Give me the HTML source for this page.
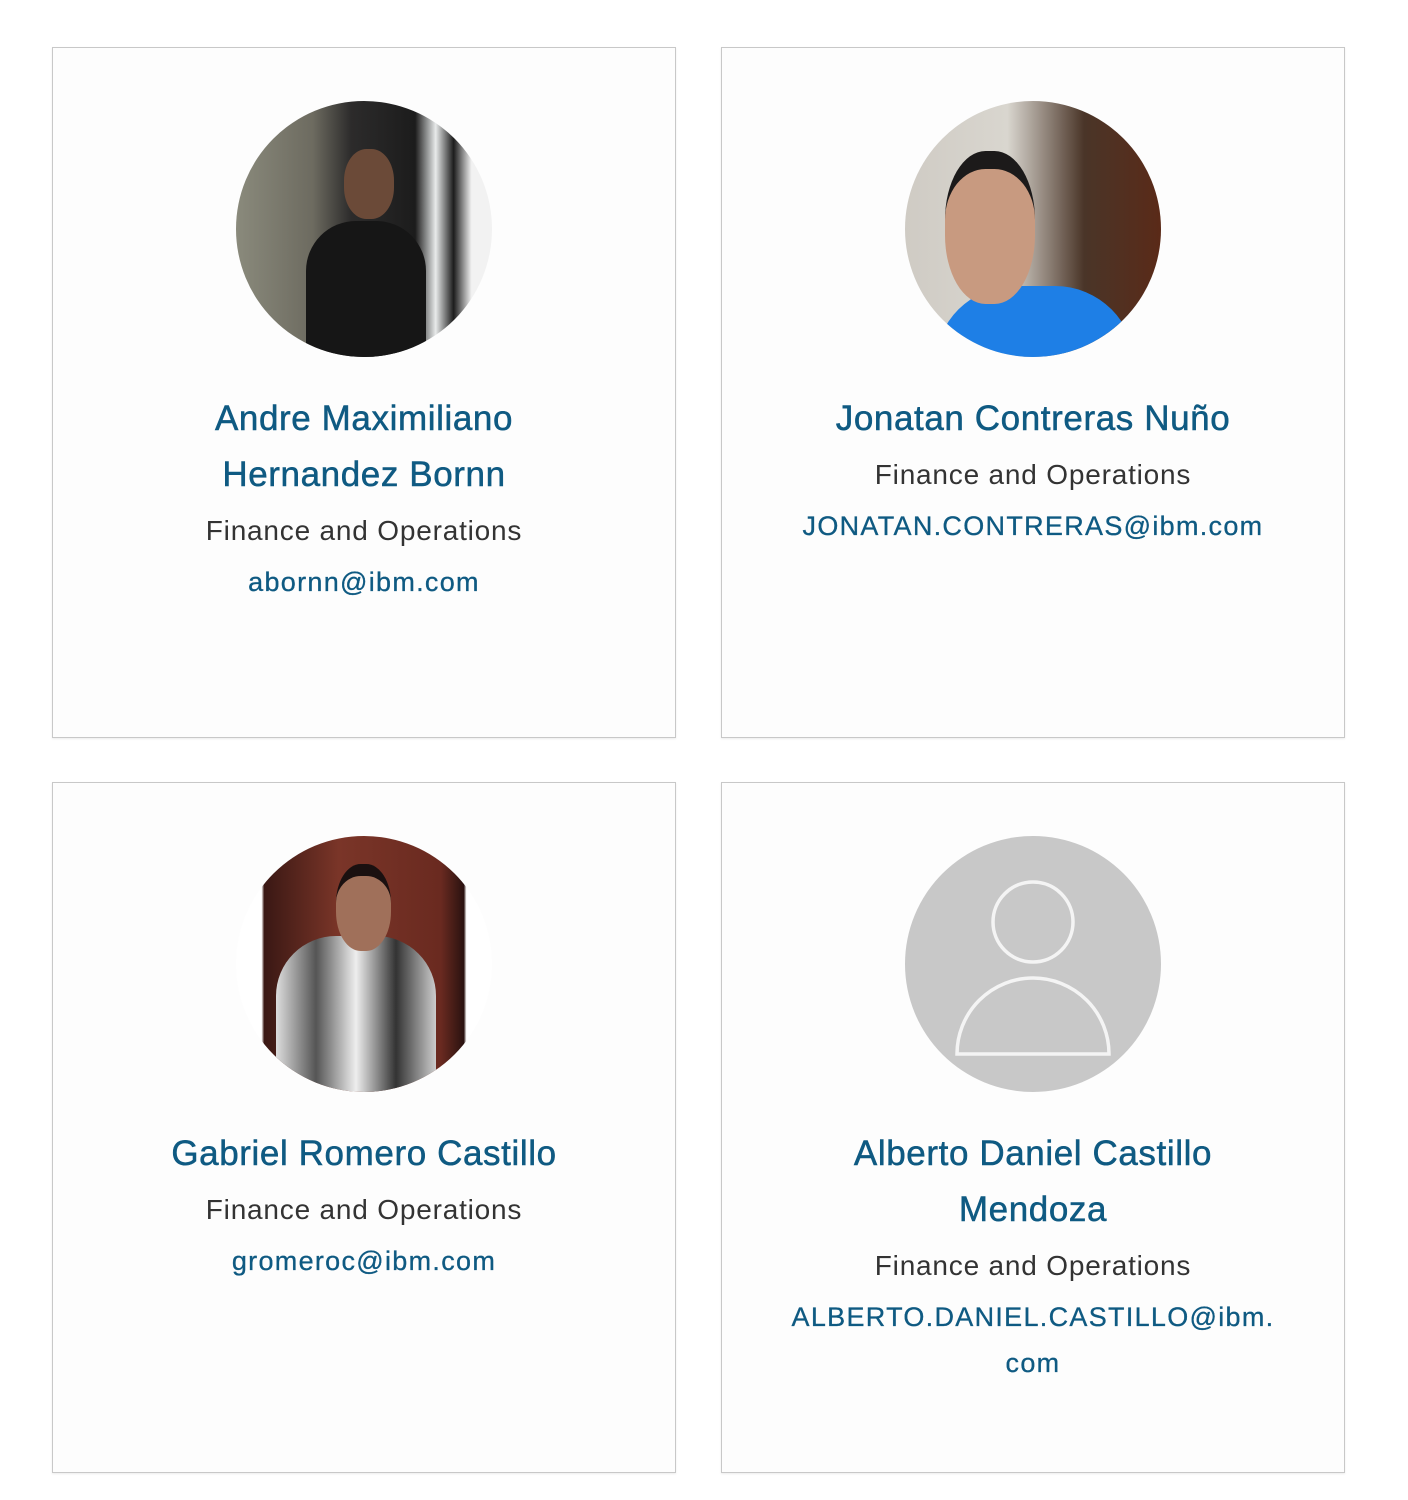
<!DOCTYPE html>
<html><head><meta charset="utf-8"><style>
body{margin:0;background:#fff;width:1408px;height:1500px;position:relative;font-family:"Liberation Sans",sans-serif}
.card{position:absolute;width:624px;height:691px;border:1px solid #c8c8c8;background:#fdfdfd;box-shadow:0 1px 2px rgba(0,0,0,.08);text-align:center;box-sizing:border-box}
.av{position:absolute;left:183px;top:53px;width:256px;height:256px;border-radius:50%;overflow:hidden}
.txt{position:absolute;top:343px;left:0;right:0}
.n{color:#0f5a82;font-size:35px;line-height:56px;letter-spacing:.6px;-webkit-text-stroke:.5px #0f5a82;width:450px;margin:0 auto}
.j{color:#333;font-size:28px;line-height:56px;letter-spacing:.8px;font-weight:300}
.e{color:#0f5a82;font-size:27px;line-height:46px;letter-spacing:1.3px;-webkit-text-stroke:.3px #0f5a82}
</style></head><body>
<div class="card" style="left:52px;top:47px">
<div class="av" style="background:linear-gradient(90deg,#8a8a7c 0%,#6d6b60 30%,#2c2b2b 45%,#1c1c1c 70%,#e8eaea 78%,#1c1c1c 85%,#f2f2f2 92%)">
<div style="position:absolute;left:70px;top:120px;width:120px;height:150px;background:#161616;border-radius:50px 50px 0 0"></div>
<div style="position:absolute;left:108px;top:48px;width:50px;height:70px;background:#6b4a38;border-radius:45%"></div>
</div>
<div class="txt"><div class="n">Andre Maximiliano Hernandez Bornn</div><div class="j">Finance and Operations</div><div class="e">abornn@ibm.com</div></div></div>

<div class="card" style="left:721px;top:47px">
<div class="av" style="background:linear-gradient(90deg,#cfcbc4 0%,#d9d6cf 40%,#4a3528 70%,#5a2a18 100%)">
<div style="position:absolute;left:30px;top:185px;width:200px;height:100px;background:#1e7fe6;border-radius:80px 80px 0 0"></div>
<div style="position:absolute;left:40px;top:50px;width:90px;height:135px;background:#c89a80;border-radius:45%;border-top:18px solid #1c1a1a"></div>
</div>
<div class="txt"><div class="n">Jonatan Contreras Nuño</div><div class="j">Finance and Operations</div><div class="e">JONATAN.CONTRERAS@ibm.com</div></div></div>

<div class="card" style="left:52px;top:782px">
<div class="av" style="background:linear-gradient(90deg,#fff 0%,#fff 10%,#3a1814 11%,#7a3528 40%,#6a2a20 80%,#2a1210 89%,#fff 90%)">
<div style="position:absolute;left:40px;top:100px;width:160px;height:160px;background:linear-gradient(90deg,#ddd,#555,#eee,#333,#ccc);border-radius:60px 60px 0 0"></div>
<div style="position:absolute;left:100px;top:28px;width:55px;height:75px;background:#a0705a;border-radius:45%;border-top:12px solid #1a1010"></div>
</div>
<div class="txt"><div class="n">Gabriel Romero Castillo</div><div class="j">Finance and Operations</div><div class="e">gromeroc@ibm.com</div></div></div>

<div class="card" style="left:721px;top:782px">
<div class="av" style="background:#c8c8c8">
<svg width="256" height="256" viewBox="0 0 256 256"><g fill="none" stroke="#f4f4f4" stroke-width="3.5"><circle cx="128" cy="86" r="40"/><path d="M52 218 A76 76 0 0 1 204 218 Z"/></g></svg>
</div>
<div class="txt"><div class="n">Alberto Daniel Castillo Mendoza</div><div class="j">Finance and Operations</div><div class="e">ALBERTO.DANIEL.CASTILLO@ibm.<br>com</div></div></div>
</body></html>
